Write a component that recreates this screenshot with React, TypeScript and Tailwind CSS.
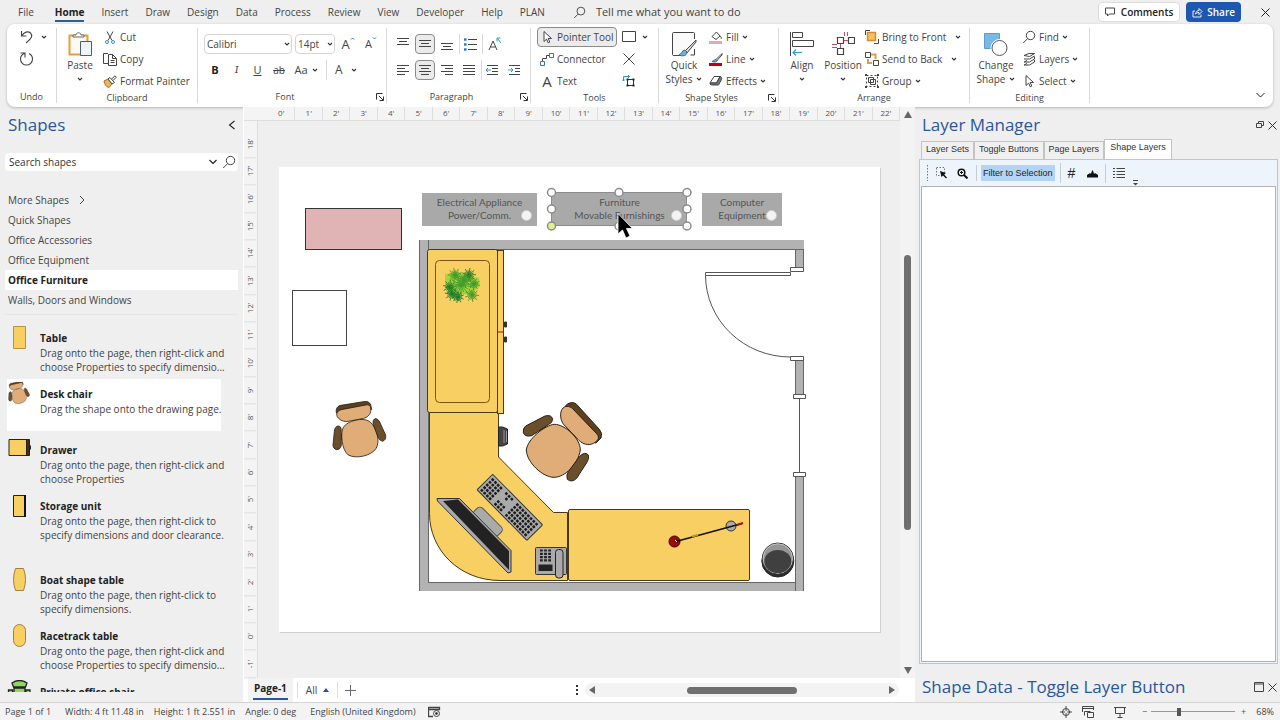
import type { ReactNode } from "react";
import clsx from "clsx";

const menuTabs = ["Insert", "Draw", "Design", "Data", "Process", "Review", "View", "Developer", "Help", "PLAN"];

const stencils = [
  "Quick Shapes",
  "Office Accessories",
  "Office Equipment",
  "Office Furniture",
  "Walls, Doors and Windows"
];

interface IconProps {
  w: number;
  h: number;
  children: ReactNode;
  className?: string;
}

function Icon({ w, h, children, className }: IconProps) {
  return (
    <svg
      width={w}
      height={h}
      viewBox={`0 0 ${w} ${h}`}
      fill="none"
      stroke="#444"
      strokeWidth="1"
      className={clsx("shrink-0", className)}
      aria-hidden="true"
    >
      {children}
    </svg>
  );
}

function Caret({ className }: { className?: string }) {
  return (
    <Icon w={6} h={6} className={className}>
      <path d="M1 2l2 2 2-2" stroke="#333" strokeWidth="1.1" />
    </Icon>
  );
}

function Magnifier({ size = 14 }: { size?: number }) {
  return (
    <svg width={size} height={size} viewBox="0 0 14 14" fill="none" stroke="#444" className="shrink-0">
      <circle cx="8.5" cy="5.5" r="4.2" />
      <path d="M5.5 8.7L1.2 13" />
    </svg>
  );
}

function Arrow() {
  return (
    <Icon w={14} h={14}>
      <path d="M4 1.5v10l2.6-2.4 1.6 3.7 1.6-.7-1.6-3.6h3.3z" fill="#fff" />
    </Icon>
  );
}

function Group({
  label,
  width,
  launcher,
  children
}: {
  label: string;
  width: string;
  launcher?: boolean;
  children: ReactNode;
}) {
  return (
    <section aria-label={label} className={clsx("my-1 flex shrink-0 flex-col border-r border-[#d9d9d9]", width)}>
      <div className="-mt-1 flex h-[68px] pt-0.5">{children}</div>
      <div className="flex h-3 items-center text-[9px]">
        <span className="flex-1 text-center">{label}</span>
        {launcher && (
          <button type="button" aria-label={`${label} settings`} className="w-3.5 pl-1">
            <Icon w={8} h={8}>
              <path d="M.5 6.5v-6h6M3 3l4 4M7.5 3.5v4h-4" stroke="#333" />
            </Icon>
          </button>
        )}
      </div>
    </section>
  );
}

function Row({ icon, label, caret }: { icon: ReactNode; label: string; caret?: string }) {
  return (
    <button type="button" className="flex h-[22px] items-center gap-[3px] whitespace-nowrap">
      <span className="flex w-3.5 justify-center">{icon}</span>
      <span>{label}</span>
      {caret && <Caret className={caret} />}
    </button>
  );
}

function BigButton({ icon, label, second, width }: { icon: ReactNode; label: string; second?: string; width: string }) {
  return (
    <button type="button" className={clsx("flex flex-col items-center pt-1", width)}>
      <span className="flex h-7 items-center">{icon}</span>
      <span className="leading-[14px]">{label}</span>
      <span className="flex h-3.5 items-center gap-1 leading-[13px]">
        {second}
        <Caret />
      </span>
    </button>
  );
}

function ToolButton({ label, active, children }: { label: string; active?: boolean; children: ReactNode }) {
  return (
    <button
      type="button"
      aria-label={label}
      className={clsx(
        "flex h-5 w-5 items-center justify-center rounded",
        active && "border border-[#8a8a8a] bg-[#ebebeb]"
      )}
    >
      {children}
    </button>
  );
}

// Strokes given as [start, end] pairs make any paragraph alignment glyph.
function Lines({ rows, top = 1 }: { rows: [number, number][]; top?: number }) {
  return (
    <Icon w={14} h={14}>
      {rows.map(([a, b], i) => (
        <path key={i} d={`M${a} ${top + 0.5 + i * 3}H${b}`} />
      ))}
    </Icon>
  );
}

function TitleBar() {
  return (
    <header className="flex h-6 shrink-0 items-center pl-[18px] pr-2.5">
      <nav className="flex items-center gap-[17px]">
        <a href="#file" className="mr-1">File</a>
        <a href="#home" className="border-b-2 border-[#2f5f8f] pt-0.5 font-bold text-[#222]">Home</a>
        {menuTabs.map((t) => (
          <a key={t} href={`#${t.toLowerCase()}`}>{t}</a>
        ))}
      </nav>
      <label className="ml-7 flex flex-1 items-center gap-2.5">
        <Magnifier size={13} />
        <input
          aria-label="Tell me what you want to do"
          placeholder="Tell me what you want to do"
          className="w-44 bg-transparent text-[11px] outline-none placeholder:text-[#444] placeholder:opacity-100"
        />
      </label>
      <button type="button" className="flex h-5 items-center gap-1.5 rounded border border-[#dcdcdc] bg-white px-1.5 font-semibold text-[#222]">
        <Icon w={10} h={10}>
          <path d="M.5 1h9v6h-5l-2 2V7h-2z" />
        </Icon>
        Comments
      </button>
      <button type="button" className="ml-1.5 flex h-5 items-center gap-1 rounded bg-[#1d57b0] px-1.5 font-semibold text-white">
        <Icon w={11} h={11}>
          <path d="M3 4H1v6h8V7.5M3.5 7C4 4.500 5.500 3.500 7 3.500V1.500l3 3-3 3V5.500C5.500 5.500 4.500 6 3.500 7z" stroke="#fff" strokeWidth=".9" />
        </Icon>
        Share
      </button>
      <button type="button" aria-label="Close" className="ml-5">
        <Icon w={9} h={9}>
          <path d="M.5.5l8 8M8.500.5l-8 8" stroke="#222" />
        </Icon>
      </button>
    </header>
  );
}

function Ribbon() {
  return (
    <div className="mx-[7px] flex h-[83px] shrink-0 rounded-lg bg-white shadow-[0_1px_3px_rgba(0,0,0,0.25)]">
      <Group label="Undo" width="w-[50px]">
        <div className="flex flex-col pl-3">
          <button type="button" aria-label="Undo" className="flex h-[22px] items-center gap-1.5">
            <Icon w={16} h={14}>
              <path d="M2.500 1v5h5M2.800 5.700C5 2 9 .8 11.500 3c2.500 2.500 1.500 5-4.500 10" stroke="#444" strokeWidth="1.100" />
            </Icon>
            <Caret />
          </button>
          <button type="button" aria-label="Redo" className="flex h-[22px] items-center">
            <Icon w={16} h={16}>
              <path d="M1.500 2h4.500v4.500M5.500 2.500C3 3.500 1.500 5.500 1.500 8c0 3.500 2.800 6 6 6s6-2.500 6-6c0-2.500-1.500-4.500-3.500-5.500" strokeWidth="1.100" />
            </Icon>
          </button>
        </div>
      </Group>

      <Group label="Clipboard" width="w-[141px]">
        <BigButton
          width="w-[46px]"
          label="Paste"
          icon={
            <Icon w={24} h={26}>
              <path d="M1.500 4.500h18v19h-18z" stroke="#e0a040" strokeWidth="2" fill="#fdfaf4" />
              <path d="M5 6V4h3c0-3 5-3 5 0h3v2z" stroke="#666" fill="#fff" />
              <path d="M12.500 10.500h11v14h-11z" stroke="#4a6070" fill="#eef4f8" />
            </Icon>
          }
        />
        <div className="flex flex-col">
          <Row
            label="Cut"
            icon={
              <Icon w={10} h={13}>
                <path d="M2 .5l5 9M8 .5l-5 9" />
                <circle cx="2" cy="11" r="1.500" stroke="#3c8ac0" />
                <circle cx="8" cy="11" r="1.500" stroke="#3c8ac0" />
              </Icon>
            }
          />
          <Row
            label="Copy"
            icon={
              <Icon w={14} h={14}>
                <path d="M5 11.500H.5V1.500H5" />
                <path d="M5.500 2.500h4l4 4v7h-8zM9.500 2.500v4h4M7.500 8.500h4M7.500 10.500h4" />
              </Icon>
            }
          />
          <Row
            label="Format Painter"
            icon={
              <Icon w={14} h={13}>
                <path d="M1 6l4-2 4 5-3 3.500C3 12 1.500 9 1 6z" fill="#f0b45c" stroke="#a4702a" />
                <path d="M5 4l2-1.500 4.500 5L9 9zM8.500 4L12 .8l1.300 1.400L10 5.500" fill="#fff" />
              </Icon>
            }
          />
        </div>
      </Group>

      <Group label="Font" width="w-[189px]" launcher>
        <div className="flex flex-col gap-1.5 pl-1.5 pt-2">
          <div className="flex items-center gap-[3px]">
            <label className="relative flex items-center">
              <select aria-label="Font family" className="h-5 w-[88px] appearance-none rounded border border-[#d5d5d5] bg-white pl-0.5">
                <option>Calibri</option>
              </select>
              <Caret className="pointer-events-none absolute right-0.5" />
            </label>
            <label className="relative flex items-center">
              <select aria-label="Font size" className="h-5 w-10 appearance-none rounded border border-[#d5d5d5] bg-white pl-0.5">
                <option>14pt</option>
              </select>
              <Caret className="pointer-events-none absolute right-0.5" />
            </label>
            <button type="button" aria-label="Grow font" className="flex w-5 items-start justify-center text-[13px] leading-4">
              A<Icon w={5} h={5}><path d="M1 3.500l1.500-1.500L4 3.500" stroke="#2b7cb8" /></Icon>
            </button>
            <button type="button" aria-label="Shrink font" className="flex w-5 items-start justify-center text-[11px] leading-4">
              A<Icon w={5} h={5}><path d="M1 1.500L2.500 3 4 1.500" stroke="#2b7cb8" /></Icon>
            </button>
          </div>
          <div className="flex items-center text-[11px]">
            <button type="button" className="w-[22px] font-bold text-[#222]">B</button>
            <button type="button" className="w-[21px] font-serif italic">I</button>
            <button type="button" className="w-[21px] underline">U</button>
            <button type="button" className="w-[22px] text-[10px] line-through">ab</button>
            <button type="button" className="flex w-8 items-center justify-center gap-1">Aa<Caret /></button>
            <button type="button" className="ml-1 flex h-5 items-center gap-2 border-l border-[#d9d9d9] pl-2 text-[12px]">A<Caret /></button>
          </div>
        </div>
      </Group>

      <Group label="Paragraph" width="w-[144px]" launcher>
        <div className="flex flex-col gap-1.5 pl-1.5 pt-2">
          <div className="flex items-center gap-0.5">
            <ToolButton label="Align top"><Lines rows={[[1, 13], [3, 11], [1, 13]]} /></ToolButton>
            <ToolButton label="Align middle" active><Lines top={3} rows={[[1, 13], [3, 11], [1, 13]]} /></ToolButton>
            <ToolButton label="Align bottom"><Lines top={6} rows={[[1, 13], [3, 11], [1, 13]]} /></ToolButton>
            <span className="flex border-l border-[#d9d9d9]">
              <ToolButton label="Bullets">
                <Icon w={14} h={14}>
                  <path d="M5 2.500h9M5 7.500h9M5 12.500h9" />
                  <path d="M1 2.500h2.500M1 7.500h2.500M1 12.500h2.500" stroke="#2b7cb8" strokeWidth="2.500" />
                </Icon>
              </ToolButton>
            </span>
            <span className="flex border-l border-[#d9d9d9] pl-0.5">
              <ToolButton label="Rotate text">
                <Icon w={14} h={14}>
                  <path d="M1 13L5 4l4 9M2.500 10h5" />
                  <path d="M9 4.500V1h3.500M9.500 1.500L13 6" stroke="#2b9cb8" />
                </Icon>
              </ToolButton>
            </span>
          </div>
          <div className="flex items-center gap-0.5">
            <ToolButton label="Align left"><Lines rows={[[1, 13], [1, 9], [1, 13], [1, 9]]} top={2} /></ToolButton>
            <ToolButton label="Center" active><Lines rows={[[1, 13], [3, 11], [1, 13], [3, 11]]} top={2} /></ToolButton>
            <ToolButton label="Align right"><Lines rows={[[1, 13], [5, 13], [1, 13], [5, 13]]} top={2} /></ToolButton>
            <ToolButton label="Justify"><Lines rows={[[1, 13], [1, 13], [1, 13], [1, 13]]} top={2} /></ToolButton>
            <span className="flex border-l border-[#d9d9d9]">
              <ToolButton label="Decrease indent">
                <Icon w={14} h={14}>
                  <path d="M2 2.500h11M7 5.500h6M7 8.500h6M2 11.500h11" />
                  <path d="M6 7H1M3 5L1 7l2 2" stroke="#2b9cb8" />
                </Icon>
              </ToolButton>
            </span>
            <ToolButton label="Increase indent">
              <Icon w={14} h={14}>
                <path d="M2 2.500h11M8 5.500h5M8 8.500h5M2 11.500h11" />
                <path d="M1 7h5M4 5l2 2-2 2" stroke="#2b9cb8" />
              </Icon>
            </ToolButton>
          </div>
        </div>
      </Group>

      <Group label="Tools" width="w-[128px]">
        <div className="flex flex-col pl-1.5">
          <button type="button" className="mt-px flex h-5 w-20 items-center gap-[3px] whitespace-nowrap rounded border border-[#8a8a8a] bg-[#ebebeb] pl-0.5">
            <Arrow />
            Pointer Tool
          </button>
          <span className="mt-px flex flex-col pl-[3px]">
            <Row
              label="Connector"
              icon={
                <Icon w={14} h={13}>
                  <path d="M2.500 8V5.500h4M6.500 5.500v-3h3" />
                  <path d="M.5 8.500h4v4h-4zM9.500.5h4v4h-4z" stroke="#2b7cb8" fill="#fff" />
                </Icon>
              }
            />
            <Row label="Text" icon={<span className="text-[15px]">A</span>} />
          </span>
        </div>
        <div className="flex flex-col pl-[5px]">
          <button type="button" aria-label="Rectangle" className="flex h-[22px] items-center gap-1.5">
            <Icon w={14} h={12}><path d="M.5.5h13v10H.5z" /></Icon>
            <Caret />
          </button>
          <button type="button" aria-label="Connection point" className="flex h-[22px] items-center">
            <Icon w={14} h={12}><path d="M1.500.5l11 11M12.500.5l-11 11" /></Icon>
          </button>
          <button type="button" aria-label="Text block" className="flex h-[22px] items-center">
            <Icon w={14} h={14}>
              <path d="M5.500 5.500h6v6h-6z" stroke="#333" />
              <path d="M4.500 5.500h2M10.500 5.500h2M4.500 11.500h2M10.500 11.500h2" stroke="#222" strokeWidth="2" />
              <path d="M1.500 7V2.500h6M6 1l1.500 1.500L6 4M0 5.500L1.500 7 3 5.500" stroke="#2b9cb8" />
            </Icon>
          </button>
        </div>
      </Group>

      <Group label="Shape Styles" width="w-[120px]" launcher>
        <BigButton
          width="w-[50px]"
          label="Quick"
          second="Styles"
          icon={
            <Icon w={26} h={26}>
              <path d="M10 24.500H2.500a1 1 0 0 1-1-1v-21a1 1 0 0 1 1-1h20a1 1 0 0 1 1 1V8M23.500 18v6h-4" fill="#fafafa" />
              <path d="M25 9L14 20l2 2 9-11z" fill="#ddd" />
              <path d="M14 19c-3 0-3 4-6 5 3 1.500 8 1 8-3z" fill="#6fb0dc" stroke="#2b6ca0" />
            </Icon>
          }
        />
        <div className="flex flex-col">
          <Row
            label="Fill"
            caret="block"
            icon={
              <Icon w={14} h={13}>
                <path d="M3 5.500L7.500 1l3.500 4-4 3.500zM11 5c1.500 1 1.500 2 1 3" fill="#fff" />
                <path d="M0 11.500h13" stroke="#e0aab0" strokeWidth="3" />
              </Icon>
            }
          />
          <Row
            label="Line"
            caret="block"
            icon={
              <Icon w={14} h={13}>
                <path d="M13 .5L7 6.500l1 1 5-5.500z" />
                <path d="M7 6.500C5 6.500 5 8 3 8.500c2 1 5 .5 5-1z" fill="#6fb0dc" stroke="#2b6ca0" />
                <path d="M0 11.500h13" stroke="#c00010" strokeWidth="3" />
              </Icon>
            }
          />
          <Row
            label="Effects"
            caret="block"
            icon={
              <Icon w={14} h={12}>
                <path d="M1 8l4-6.500h6L7.500 8z" fill="#fff" />
                <path d="M7.500 8L11 1.500c1.500 0 2 1.500 1.500 3L9.500 10H3C1.500 10 1 9 1 8z" fill="#777" />
              </Icon>
            }
          />
        </div>
      </Group>

      <Group label="Arrange" width="w-[191px]">
        <BigButton
          width="w-[46px]"
          label="Align"
          icon={
            <Icon w={24} h={26}>
              <path d="M.5 1v24M2.500 1.500h10v5h-10zM2.500 9.500h21v6h-21z" />
              <path d="M12 21.500H3M6 18.500l-3 3 3 3" stroke="#2b9cd0" strokeWidth="1.200" />
            </Icon>
          }
        />
        <BigButton
          width="w-9"
          label="Position"
          icon={
            <Icon w={24} h={26}>
              <path d="M6.500 6.500h6v6h-6zM17.500 6.500h6v6h-6zM6.500 17.500h6v6h-6z" strokeWidth="1.200" />
              <path d="M13.500 1v4M16.500 1v4M1 13.500h5M1 16.500h5M13 9.500h4M9.500 13v4" stroke="#c05060" />
            </Icon>
          }
        />
        <div className="flex flex-col pl-1">
          <Row
            label="Bring to Front"
            caret="ml-1.5"
            icon={
              <Icon w={14} h={14}>
                <path d="M.5 5V.5H5M13.500 9v4.500H9" />
                <path d="M2.500 2.500h8v8h-8z" fill="#f5c065" stroke="#d09030" strokeWidth="1.500" />
              </Icon>
            }
          />
          <Row
            label="Send to Back"
            caret="ml-1.5"
            icon={
              <Icon w={14} h={14}>
                <path d="M6 2.500h4.500V7M3 7v4h4" stroke="#e0a040" strokeWidth="2" />
                <path d="M.5.5h5v5h-5zM8.500 8.500h5v5h-5z" fill="#fff" />
              </Icon>
            }
          />
          <Row
            label="Group"
            caret="block"
            icon={
              <Icon w={14} h={14}>
                <path d="M1.500 1.500h11v11h-11z" strokeDasharray="2 2" />
                <path d="M3.500 3.500h5v5h-5zM5.500 5.500h5v5h-5z" />
                <path d="M0 1h2M12 1h2M0 13h2M12 13h2" strokeWidth="2" />
              </Icon>
            }
          />
        </div>
      </Group>

      <Group label="Editing" width="w-[120px]">
        <BigButton
          width="w-[52px]"
          label="Change"
          second="Shape"
          icon={
            <Icon w={24} h={25}>
              <path d="M.5 1.500h15v15H.5z" fill="#78b8e4" stroke="#5a9cd0" />
              <circle cx="15.500" cy="16" r="8.500" fill="#fff" stroke="#fff" />
              <circle cx="15.500" cy="16" r="7.500" fill="#fff" stroke="#555" />
            </Icon>
          }
        />
        <div className="flex flex-col">
          <Row label="Find" caret="block" icon={<Magnifier />} />
          <Row
            label="Layers"
            caret="block"
            icon={
              <Icon w={14} h={14}>
                <path d="M2 3.500l5-2h5.500l-5 3zM2 7h5.500l5-3M12.500 4.500v2.500l-5 3H2l3-1.500M12.500 8v2l-5 3H2l3-1.500" />
              </Icon>
            }
          />
          <Row label="Select" caret="block" icon={<Arrow />} />
        </div>
      </Group>

      <div className="flex flex-1 items-end justify-end pb-2 pr-2">
        <button type="button" aria-label="Collapse ribbon">
          <Icon w={9} h={9}><path d="M.5 3l4 4 4-4" stroke="#222" /></Icon>
        </button>
      </div>
    </div>
  );
}

// Office chair drawn around (432, 182) in its own units, back to the upper right.
function Chair({ transform }: { transform: string }) {
  return (
    <g transform={transform} stroke="#2a2118" strokeWidth="3" strokeLinejoin="round">
      <path d="M385 120l15-12 14 14-16 10zM474 130l12-10 14 14-12 10zM478 222l12-14 14 10-12 16z" fill="#a86a34" />
      <path d="M433 103c32 0 78 42 78 77-6 42-46 82-79 82-34 0-82-45-83-82 3-32 56-75 84-77z" fill="#e0ad78" />
      <path d="M466 48q14-16 32-7l70 77q11 11 5 26l-16 16-86-90z" fill="#5c4020" />
      <path d="M456 58c8-12 22-11 32-2l72 75c13 14 0 25-14 31-18 5-32-3-42-14l-44-46c-10-14-10-34-4-44z" fill="#e0ad78" />
      <path d="M347 108l58-30q20-5 23 10 0 10-13 16l-50 33q-20 5-25-9-2-13 7-20z" fill="#6b4f2c" />
      <path d="M508 200q17-17 27-5 3 10-3 20l-32 50q-15 14-28 3-4-13 3-23z" fill="#6b4f2c" />
    </g>
  );
}

const fronds = [
  [455, 275, 7], [469, 275, 7], [474, 284, 6], [450, 287, 7],
  [461, 285, 11], [452, 294, 7], [472, 295, 7], [458, 297, 6], [464, 280, 8]
];

function Plant() {
  return (
    <g>
      <path d="M445 274l12-2 22 6 1 8-8 8-20 1-7-8z" fill="#8cd42c" opacity=".7" />
      {fronds.map(([cx, cy, r], i) => (
        <g key={i} stroke={i % 2 ? "#1f7a2a" : "#3f9a2c"} strokeWidth=".9">
          {Array.from({ length: 18 }, (_, k) => {
            const a = (k * Math.PI) / 9 + i;
            const len = k % 2 ? r : r * 0.7;
            return <path key={k} d={`M${cx} ${cy}L${cx + Math.cos(a) * len} ${cy + Math.sin(a) * len}`} />;
          })}
        </g>
      ))}
    </g>
  );
}

function isKeyGap(r: number, c: number) {
  return c === 4 || c === 8 || (r > 0 && r < 3 && c > 4 && c < 8 && !(r === 1 && c === 6));
}

function Keyboard() {
  return (
    <g transform="translate(492.7 474.3) rotate(45.4)">
      <rect width="71" height="22" rx="1" fill="#aaa" stroke="#333" />
      {Array.from({ length: 5 }, (_, r) =>
        Array.from({ length: 17 }, (_, c) =>
          isKeyGap(r, c) ? null : (
            <rect key={`${r}-${c}`} x={2.5 + c * 3.9} y={2.5 + r * 3.8} width="2.700" height="2.600" rx=".6" fill="#1c1c1c" />
          )
        )
      )}
    </g>
  );
}

function FloorPlan() {
  return (
    <svg viewBox="279 167 601 465" className="block h-full w-full" fill="none" aria-label="Office floor plan">
      <rect x="305.5" y="208.5" width="96" height="41" fill="#e0b3b5" stroke="#333" />
      <rect x="292.5" y="290.5" width="54" height="55" fill="#fff" stroke="#444" />

      <g fill="#b2b2b2">
        <path d="M419 240h385v9.500H428V582h367V474h9v117H419z" />
        <path d="M795 249h9v20h-9zM795 358h9v38h-9z" />
      </g>
      <path d="M428.500 240v342M428 249.500h375M428 582.500h367M419.500 240v351M795.500 249v20M795.500 358v38M795.500 476v115M803.500 358v38M803.500 476v115M803.500 249v20" stroke="#666" />
      <g stroke="#555" fill="#fff">
        <path d="M705.500 272.500h85v3h-85z" />
        <path d="M790.500 267.500h13v4h-13zM790.500 356.500h13v4h-13zM793.500 394.500h12v4h-12zM793.500 472.500h12v4h-12z" />
        <path d="M705.500 275.500A85 82 0 0 0 790.500 357M799.500 399v73" fill="none" />
      </g>

      <g fill="#f7cf62" stroke="#4a3818">
        <path d="M429.500 412.500h69V457l55 55.500h14v68H500c-40 0-70.500-30-70.500-67z" />
        <rect x="568.5" y="509.5" width="181" height="71" rx="1.500" />
        <rect x="427.500" y="249.500" width="70" height="163" rx="2" />
        <rect x="497.500" y="250.500" width="6" height="163" />
        <path d="M498 332h5" stroke="#c05040" strokeWidth="1.500" />
        <rect x="435.5" y="260.5" width="54" height="142" rx="4" stroke="#7a5214" />
      </g>
      <path d="M504.500 322h2v5h-2zM504.500 337h2v5h-2z" fill="#333" stroke="#333" />
      <Plant />

      <path d="M498.500 427h4l5 2v15l-5 2h-4z" fill="#444" stroke="#222" />
      <path d="M504 430v13M506.500 431v11" stroke="#999" />
      <Keyboard />
      <rect x="-17" y="-7" width="34" height="12" rx="4" transform="translate(487 522.500) rotate(45)" fill="#aaa" stroke="#555" />
      <path d="M437 498.500h22.500l51.500 52v21.500l-3 1-70.500-72z" fill="#aaa" stroke="#333" />
      <path d="M443 501l15-1.500 51 51.500v19z" fill="#222" />

      <rect x="535.500" y="547.500" width="31" height="27" rx="1" fill="#aaa" stroke="#333" />
      <rect x="555.500" y="549.500" width="7.500" height="28.500" rx="3" fill="#aaa" stroke="#222" />
      <path d="M538.500 564.500h14v6.500h-14z" fill="#222" />
      {[0, 1, 2, 3].map((r) => (
        <path key={r} d={`M540 ${550.5 + r * 3.3}h11`} stroke="#222" strokeWidth="2.200" strokeDasharray="2.800 1.300" />
      ))}

      <Chair transform="translate(410 390) scale(.3333)" />
      <Chair transform="translate(359.500 438) rotate(-57) scale(.245) translate(-432 -182)" />

      <circle cx="731" cy="526" r="5" fill="#aaa" stroke="#333" />
      <circle cx="674.500" cy="541.500" r="5.500" fill="#980c0c" stroke="#400" />
      <path d="M676 541.500l66-18" stroke="#111" strokeWidth="1.500" />
      <path d="M737 525l6-2" stroke="#b01010" strokeWidth="2" />
      <path d="M692 536.500l6-1.500" stroke="#c09030" strokeWidth="2" />
      <path d="M675 540l2 2" stroke="#fff" />

      <circle cx="777.800" cy="561" r="16" fill="#2c2c2c" stroke="#222" />
      <circle cx="777.800" cy="558.500" r="15.500" fill="#969696" stroke="#333" />
      <circle cx="777.800" cy="558.500" r="14.700" fill="#969696" stroke="#ccc" strokeWidth=".8" />
      <ellipse cx="777.800" cy="561.500" rx="13.500" ry="11.500" fill="#404040" />
    </svg>
  );
}

interface LayerToggleProps {
  place: string;
  lines: [string, string];
}

function LayerToggle({ place, lines }: LayerToggleProps) {
  return (
    <button
      type="button"
      className={clsx(
        "absolute top-[26px] h-[33px] bg-[#a9a9a9] pb-0.5 text-center font-[Lato,sans-serif] leading-[13px] text-[#555]",
        place
      )}
    >
      {lines[0]}
      <br />
      {lines[1]}
      <span className="absolute right-[5px] top-[17px] h-[11px] w-[11px] rounded-full border border-[#ccc] bg-[#f4f4f4]" />
    </button>
  );
}

function Canvas() {
  return (
    <div className="min-w-0 flex-1 overflow-hidden pl-[21px] pt-[46px]">
      <div className="relative h-[465px] w-[601px] bg-white shadow-[1px_1px_0_#d0d0d0]">
        <FloorPlan />
        <LayerToggle place="left-[143px] w-[115px]" lines={["Electrical Appliance", "Power/Comm."]} />
        <LayerToggle place="left-[273px] w-[135px]" lines={["Furniture", "Movable Furnishings"]} />
        <LayerToggle place="left-[423px] w-[80px]" lines={["Computer", "Equipment"]} />
        <svg width="150" height="60" viewBox="545 185 150 60" className="pointer-events-none absolute left-[266px] top-[18px]">
          <rect x="551.5" y="192.5" width="135" height="33" fill="none" stroke="#8c8c8c" />
          {[[551.5, 192.5], [619, 192.5], [687, 192.5], [551.5, 209], [687, 209], [687, 226], [619, 226]].map(([x, y]) => (
            <circle key={`${x}-${y}`} cx={x} cy={y} r="4" fill="#fff" stroke="#8c8c8c" strokeWidth="1.500" />
          ))}
          <circle cx="551.5" cy="226" r="4" fill="#e2f08a" stroke="#8c8c8c" strokeWidth="1.500" />
          <path d="M618 213.500v20.500l4.500-4 3.500 8 4-2-3.500-7.500h6z" fill="#000" stroke="#fff" strokeWidth=".8" />
        </svg>
      </div>
    </div>
  );
}

function HorizontalRuler() {
  return (
    <div className="flex h-3.5 shrink-0 border-b border-[#dedede] bg-[#f4f4f4] pl-6 text-[8px] leading-3 text-[#555]">
      {Array.from({ length: 23 }, (_, i) => (
        <span key={i} className="min-w-0 flex-1 border-r border-[#dedede] text-center">{i}'</span>
      ))}
    </div>
  );
}

function VerticalRuler() {
  return (
    <div className="flex w-3.5 shrink-0 flex-col border-r border-[#dedede] bg-[#f4f4f4] pt-2.5 text-[8px] leading-3 text-[#555]">
      {Array.from({ length: 20 }, (_, i) => (
        <span key={i} className="min-h-0 w-3 flex-1 rotate-180 border-t border-[#dedede] text-center [writing-mode:vertical-rl]">
          {18 - i}'
        </span>
      ))}
    </div>
  );
}

interface ShapeItemProps {
  icon: ReactNode;
  name: string;
  lines?: string[];
  size?: string;
}

function ShapeItem({ icon, name, lines = [], size = "h-14" }: ShapeItemProps) {
  return (
    <li className={clsx("ml-[7px] mr-[22px] flex shrink-0 whitespace-nowrap pt-[3px]", size)}>
      <span className="flex w-[33px] shrink-0">{icon}</span>
      <span className="flex flex-col pt-1">
        <strong className="font-bold leading-4 text-[#222]">{name}</strong>
        {lines.map((l) => (
          <span key={l} className="leading-[14px]">{l}</span>
        ))}
      </span>
    </li>
  );
}

function ShapesPanel() {
  return (
    <aside className="flex w-[243px] shrink-0 flex-col overflow-hidden pb-2.5">
      <div className="flex h-9 shrink-0 items-center justify-between pl-2 pr-[7px]">
        <h2 className="text-[17px] text-[#2b579a]">Shapes</h2>
        <button type="button" aria-label="Collapse shapes">
          <Icon w={8} h={10}><path d="M6.500 1l-5 4 5 4" stroke="#222" strokeWidth="1.100" /></Icon>
        </button>
      </div>
      <label className="ml-[5px] mr-[5px] mt-2.5 flex h-[18px] shrink-0 items-center gap-1 rounded bg-white pl-1 pr-0.5">
        <input
          aria-label="Search shapes"
          placeholder="Search shapes"
          className="min-w-0 flex-1 bg-transparent outline-none placeholder:text-[#333] placeholder:opacity-100"
        />
        <Icon w={10} h={8}><path d="M1.500 2l3.500 3.500L8.500 2" stroke="#222" strokeWidth="1.200" /></Icon>
        <Magnifier />
      </label>
      <div className="ml-[5px] mr-[5px] mt-[19px] flex shrink-0 flex-col border-b border-[#e6e6e6] pb-1">
        <button type="button" className="flex h-5 items-center gap-2.5 pl-[3px]">
          More Shapes
          <Icon w={6} h={10}><path d="M1 1l4 4-4 4" /></Icon>
        </button>
        {stencils.map((s) => (
          <button
            key={s}
            type="button"
            className={clsx("h-5 pl-[3px] text-left", s === "Office Furniture" && "bg-white font-bold text-[#222]")}
          >
            {s}
          </button>
        ))}
      </div>
      <ul className="mt-2 flex min-h-0 flex-1 flex-col overflow-hidden">
        <ShapeItem
          name="Table"
          lines={["Drag onto the page, then right-click and", "choose Properties to specify dimensio..."]}
          icon={<Icon w={24} h={24}><path d="M6.500.5h12v22h-12z" fill="#f7cf62" stroke="#b89040" /></Icon>}
        />
        <ShapeItem
          size="mb-1 h-[52px] bg-white"
          name="Desk chair"
          lines={["Drag the shape onto the drawing page."]}
          icon={
            <Icon w={24} h={24}>
              <Chair transform="translate(12 14) rotate(-60) scale(.098) translate(-432 -182)" />
            </Icon>
          }
        />
        <ShapeItem
          name="Drawer"
          lines={["Drag onto the page, then right-click and", "choose Properties"]}
          icon={
            <Icon w={24} h={24}>
              <path d="M2 1.500h18v16H2z" fill="#f7cf62" stroke="#222" />
              <path d="M19.500 1.500h3v16h-3zM22 8h2v3h-2z" fill="#4a2c14" stroke="#222" />
            </Icon>
          }
        />
        <ShapeItem
          size="h-[74px]"
          name="Storage unit"
          lines={["Drag onto the page, then right-click to", "specify dimensions and door clearance."]}
          icon={
            <Icon w={24} h={24}>
              <path d="M6.500 1.500h11v21h-11z" fill="#f7cf62" stroke="#222" />
              <path d="M18 1v22" stroke="#111" strokeWidth="2" />
            </Icon>
          }
        />
        <ShapeItem
          name="Boat shape table"
          lines={["Drag onto the page, then right-click to", "specify dimensions."]}
          icon={<Icon w={24} h={24}><path d="M8.500.5h8q4 11 0 22h-8q-4-11 0-22z" fill="#f7cf62" stroke="#a08040" /></Icon>}
        />
        <ShapeItem
          name="Racetrack table"
          lines={["Drag onto the page, then right-click and", "choose Properties to specify dimensio..."]}
          icon={<Icon w={24} h={24}><rect x="6.500" y=".5" width="12" height="22" rx="6" fill="#f7cf62" stroke="#a08040" /></Icon>}
        />
        <ShapeItem
          name="Private office chair"
          icon={
            <Icon w={24} h={24}>
              <path d="M5 3q7.500-5 15 0l-1.500 4h-12zM7 8h11v12H7zM1.500 10h4v8h-4zM19 10h4v8h-4z" fill="#8cd860" stroke="#222" strokeWidth="1.300" />
            </Icon>
          }
        />
      </ul>
    </aside>
  );
}

function PageTabs() {
  return (
    <div className="flex h-6 shrink-0 items-center bg-white pl-1">
      <button type="button" className="flex h-full items-start bg-[#f3f3f3] px-[5px] pt-[3px] font-bold text-[#222]">
        <span className="border-b-2 border-[#2b579a] px-px pb-0.5">Page-1</span>
      </button>
      <button type="button" className="ml-1 flex h-4 items-center gap-1.5 border-l border-[#ddd] px-2">
        All
        <Icon w={6} h={6}><path d="M0 5h6L3 1z" fill="#2b4f9a" stroke="none" /></Icon>
      </button>
      <button type="button" aria-label="Insert page" className="flex h-4 items-center border-l border-[#ddd] pl-[7px]">
        <Icon w={11} h={11}><path d="M5.500 0v11M0 5.500h11" stroke="#667" /></Icon>
      </button>
      <div className="ml-auto mr-4 flex items-center gap-1.5">
        <Icon w={4} h={11}><path d="M2 0v11" stroke="#333" strokeWidth="2" strokeDasharray="2 2" /></Icon>
        <div className="flex h-3.5 w-[314px] items-center justify-between rounded-full bg-[#f3f3f3] px-1">
          <Icon w={6} h={8}><path d="M6 0v8L0 4z" fill="#666" stroke="none" /></Icon>
          <span className="h-[7px] w-[110px] rounded-full bg-[#707070]" />
          <Icon w={6} h={8}><path d="M0 0v8l6-4z" fill="#666" stroke="none" /></Icon>
        </div>
      </div>
    </div>
  );
}

function Workspace() {
  return (
    <main className="mr-1 flex min-w-0 flex-1 flex-col border-l border-white">
      <div className="flex min-h-0 flex-1">
        <div className="flex min-w-0 flex-1 flex-col">
          <HorizontalRuler />
          <div className="flex min-h-0 flex-1">
            <VerticalRuler />
            <Canvas />
          </div>
        </div>
        <div className="flex w-[15px] shrink-0 flex-col items-center bg-[#f3f3f3] py-1">
          <Icon w={8} h={7}><path d="M0 7h8L4 0z" fill="#666" stroke="none" /></Icon>
          <div className="flex w-[7px] flex-1 flex-col">
            <span className="flex-[25_0_0]" />
            <span className="flex-[50_0_0] rounded-full bg-[#707070]" />
            <span className="flex-[25_0_0]" />
          </div>
          <Icon w={8} h={7}><path d="M0 0h8L4 7z" fill="#666" stroke="none" /></Icon>
        </div>
      </div>
      <PageTabs />
    </main>
  );
}

function PanelButtons({ second }: { second?: boolean }) {
  return (
    <span className="flex items-center gap-1 pr-px">
      <button type="button" aria-label="Restore panel">
        {second ? (
          <Icon w={10} h={10}><path d="M.5.5h9v9h-9zM.5 2h9" /></Icon>
        ) : (
          <Icon w={8} h={8}><path d="M2.500 2V.5h5v4H6M.5 2.500h5v4h-5z" /></Icon>
        )}
      </button>
      <button type="button" aria-label="Close panel">
        <Icon w={9} h={9}><path d="M.5.5l8 8M8.500.5l-8 8" stroke="#333" /></Icon>
      </button>
    </span>
  );
}

function LayerManager() {
  return (
    <aside className="flex w-[361px] shrink-0 flex-col pr-0.5">
      <div className="flex h-8 items-center justify-between pl-[3px] pt-1">
        <h2 className="text-[17px] text-[#2b579a]">Layer Manager</h2>
        <PanelButtons />
      </div>
      <div className="flex items-end pl-0.5 font-[Liberation_Sans,sans-serif] text-[9px] leading-3 text-[#333]">
        {["Layer Sets", "Toggle Buttons", "Page Layers"].map((t) => (
          <button key={t} type="button" className="h-[18px] border border-b-0 border-[#c4c4c4] bg-[#f0f0f0] px-1 pb-1">
            {t}
          </button>
        ))}
        <button type="button" className="h-5 border border-b-0 border-[#c4c4c4] bg-white px-[5px] pb-1.5">Shape Layers</button>
      </div>
      <div className="flex min-h-0 flex-1 flex-col border border-[#c4c4c4] bg-[#eef4fb]">
        <div className="flex h-[26px] shrink-0 items-center pl-1.5 font-[Liberation_Sans,sans-serif] text-[9px] text-[#222]">
          <Icon w={4} h={16}><path d="M1.500 0v16" stroke="#777" strokeDasharray="1.500 1.500" /></Icon>
          <button type="button" aria-label="Select" className="ml-1.5">
            <Icon w={11} h={12}>
              <path d="M.5.5h8v8h-8z" stroke="#777" strokeDasharray="1.500 1.500" />
              <path d="M4 4l6 2-2 1.500 3 3-1 1-3-3L5.500 10z" fill="#111" stroke="none" />
            </Icon>
          </button>
          <button type="button" aria-label="Zoom" className="ml-2.5">
            <Icon w={11} h={11}>
              <circle cx="4.500" cy="4.500" r="3.300" stroke="#111" strokeWidth="1.500" />
              <path d="M7 7l3.500 3.500" stroke="#111" strokeWidth="2" />
              <path d="M3 4.500h3M4.500 3v3" stroke="#111" />
            </Icon>
          </button>
          <span className="ml-2 border-l border-[#c4ccd6] pl-1">
            <button type="button" className="whitespace-nowrap bg-[#b4d4f6] px-0.5 leading-4">Filter to Selection</button>
          </span>
          <span className="ml-[5px] flex items-center border-l border-[#c4ccd6] pl-[7px]">
            <button type="button" className="text-[14px] leading-5">#</button>
            <button type="button" aria-label="Active layers" className="ml-3">
              <Icon w={11} h={9}><path d="M0 8.500V6l3-2 1 1 .5-2 1-2 1 2 .5 2 1-1 3 2v2.500z" fill="#111" stroke="none" /></Icon>
            </button>
          </span>
          <span className="ml-[7px] flex items-center border-l border-[#c4ccd6] py-1 pl-[7px]">
            <Icon w={12} h={11}>
              <path d="M3.500.5H12M3.500 3.500H12M3.500 6.500H12M3.500 9.500H12" />
              <path d="M0 .5h2M0 3.500h2M0 6.500h2M0 9.500h2" />
            </Icon>
          </span>
          <Icon w={5} h={6} className="ml-2 self-end"><path d="M0 .5h5" /><path d="M0 3h5L2.500 5.500z" fill="#444" stroke="none" /></Icon>
        </div>
        <div className="mx-px mb-px min-h-0 flex-1 border border-[#b0b0b0] bg-white" />
      </div>
      <div className="flex h-[38px] items-center justify-between pl-[3px] pt-2">
        <h2 className="text-[17px] text-[#2b579a]">Shape Data - Toggle Layer Button</h2>
        <PanelButtons second />
      </div>
    </aside>
  );
}

function StatusBar() {
  return (
    <footer className="flex h-[18px] shrink-0 items-center whitespace-nowrap border-t border-[#d4d4d4] bg-[#f3f3f3] pl-[5px] pr-1.5 text-[9px]">
      <span>Page 1 of 1</span>
      <span className="ml-3.5">Width: 4 ft 11.48 in</span>
      <span className="ml-2.5">Height: 1 ft 2.551 in</span>
      <span className="ml-2.5">Angle: 0 deg</span>
      <span className="ml-3.5">English (United Kingdom)</span>
      <Icon w={13} h={12} className="ml-3">
        <path d="M5 10.500H.5v-9h11V4M.5 3.500h11" strokeWidth="1.300" />
        <circle cx="8.500" cy="7.500" r="3" />
        <circle cx="8.500" cy="7.500" r="1" fill="#222" />
      </Icon>
      <Icon w={12} h={12} className="ml-auto">
        <circle cx="6" cy="6" r="3.500" />
        <path d="M6 0v5M6 7v5M0 6h5M7 6h5" />
      </Icon>
      <Icon w={12} h={12} className="ml-2.5">
        <path d="M.5 6V.5h11V4M.5 2.500h11M2.500 9.500v-4h6M5.500 6.500h6v5h-6z" />
      </Icon>
      <Icon w={12} h={12} className="ml-5">
        <path d="M0 1.500h12M1.500 1.500v6h9v-6M6 8v3M3.500 11.500h5" />
      </Icon>
      <button type="button" aria-label="Zoom out" className="ml-4 text-[#555]">−</button>
      <input
        type="range"
        aria-label="Zoom"
        defaultValue={32}
        className="ml-1 h-2 w-[84px] appearance-none bg-[linear-gradient(#999,#999)] bg-[length:100%_1px] bg-center bg-no-repeat [&::-webkit-slider-thumb]:h-2 [&::-webkit-slider-thumb]:w-1 [&::-webkit-slider-thumb]:appearance-none [&::-webkit-slider-thumb]:bg-[#555]"
      />
      <button type="button" aria-label="Zoom in" className="ml-1.5 text-[#555]">+</button>
      <span className="ml-2.5">68%</span>
    </footer>
  );
}

export default function App() {
  return (
    <div className="flex h-screen flex-col overflow-hidden bg-[#efefef] font-['Open_Sans',sans-serif] text-[10px] text-[#444]">
      <TitleBar />
      <Ribbon />
      <div className="flex min-h-0 flex-1">
        <ShapesPanel />
        <Workspace />
        <LayerManager />
      </div>
      <StatusBar />
    </div>
  );
}
